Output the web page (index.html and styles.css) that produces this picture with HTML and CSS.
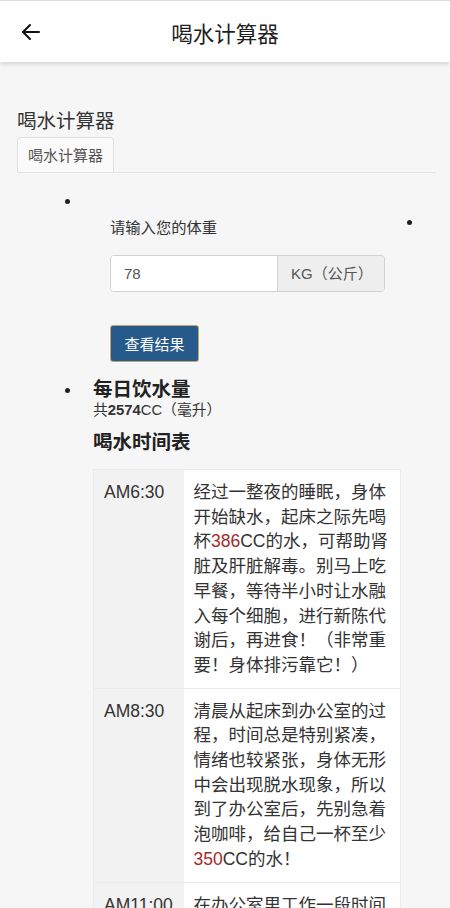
FILE: index.html
```html
<!DOCTYPE html>
<html lang="zh-CN">
<head>
<meta charset="utf-8">
<title>喝水计算器</title>
<link rel="stylesheet" href="styles.css">
</head>
<body>
<header class="appbar">
  <button class="back" aria-label="返回">
    <svg width="24" height="24" viewBox="0 0 24 24" fill="none" stroke="#111" stroke-width="2" stroke-linecap="round" stroke-linejoin="round"><path d="M20 12H4"/><path d="M11 5l-7 7 7 7"/></svg>
  </button>
  <h1 class="appbar-title">喝水计算器</h1>
</header>
<main class="page">
  <h2 class="section-title">喝水计算器</h2>
  <div class="tabs"><div class="tab">喝水计算器</div></div>
  <div class="list">
    <div class="item item-form">
      <div class="marker"><span class="dot"></span></div>
      <div class="form">
        <div class="label-row">
          <span class="label">请输入您的体重</span>
          <span class="dot dot-right"></span>
        </div>
        <div class="input-group">
          <div class="input">78</div>
          <div class="addon">KG（公斤）</div>
        </div>
        <button class="btn">查看结果</button>
      </div>
    </div>
    <div class="item item-result">
      <div class="marker"><span class="dot dot-result"></span></div>
      <div class="result">
        <h3 class="result-title">每日饮水量</h3>
        <p class="total">共<b>2574</b>CC（毫升）</p>
        <h3 class="result-title schedule-title">喝水时间表</h3>
        <table class="schedule">
          <tr>
            <td class="time">AM6:30</td>
            <td class="desc">经过一整夜的睡眠，身体开始缺水，起床之际先喝杯<span class="num">386</span>CC的水，可帮助肾脏及肝脏解毒。别马上吃早餐，等待半小时让水融入每个细胞，进行新陈代谢后，再进食！（非常重要！身体排污靠它！）</td>
          </tr>
          <tr>
            <td class="time">AM8:30</td>
            <td class="desc">清晨从起床到办公室的过程，时间总是特别紧凑，情绪也较紧张，身体无形中会出现脱水现象，所以到了办公室后，先别急着泡咖啡，给自己一杯至少<span class="num">350</span>CC的水！</td>
          </tr>
          <tr>
            <td class="time">AM11:00</td>
            <td class="desc">在办公室里工作一段时间后，一定要趁起身动动的时候，再给自己一天里的第三杯水，补充流失的水分，有助于放松紧张的工作情绪！</td>
          </tr>
        </table>
      </div>
    </div>
  </div>
</main>
</body>
</html>
```
FILE: styles.css
```css
* { box-sizing: border-box; }
html, body { margin: 0; padding: 0; }
body {
  width: 450px;
  background: #f6f6f6;
  color: #333;
  font-family: "Liberation Sans", "Noto Sans CJK SC", sans-serif;
}
.appbar {
  height: 62px;
  background: #fff;
  border-top: 1px solid #dcdcdc;
  box-shadow: 0 2px 4px rgba(0,0,0,0.14);
  display: flex;
  align-items: center;
  justify-content: center;
  position: relative;
}
.back {
  position: absolute;
  left: 19px;
  top: 19px;
  width: 24px;
  height: 24px;
  padding: 0;
  border: 0;
  background: none;
  display: flex;
}
.appbar-title {
  margin: 2px 0 0 0;
  font-family: "Noto Sans CJK SC", sans-serif;
  font-size: 21.5px;
  font-weight: 400;
  color: #1f1f1f;
  letter-spacing: 0;
}
.page {
  padding: 0 14px 0 17px;
}
.section-title {
  margin: 44px 0 0 0;
  font-family: "Noto Sans CJK SC", sans-serif;
  font-size: 19.5px;
  line-height: 28px;
  font-weight: 400;
  color: #333;
}
.tabs {
  margin-top: 3px;
  border-bottom: 1px solid #e2e2e2;
  display: flex;
}
.tab {
  width: 97px;
  height: 35px;
  padding: 7px 10px 0 10px;
  border: 1px solid #e2e2e2;
  border-bottom: 0;
  border-radius: 4px 4px 0 0;
  background: #fafafa;
  font-family: "Noto Sans CJK SC", sans-serif;
  font-size: 15px;
  line-height: 20px;
  color: #555;
}
.list {
  margin-top: 18px;
}
.item {
  display: flex;
  align-items: flex-start;
}
.marker {
  width: 76px;
  flex: none;
}
.dot {
  display: block;
  width: 5px;
  height: 5px;
  border-radius: 50%;
  background: #222;
}
.marker .dot {
  margin: 8px 0 0 48px;
}
.form {
  padding: 26px 0 0 17px;
}
.label-row {
  width: 302px;
  display: flex;
  justify-content: space-between;
  align-items: flex-start;
}
.label {
  font-size: 15.3px;
  line-height: 21px;
  color: #333;
}
.dot-right {
  margin-top: 2.5px;
}
.input-group {
  margin-top: 17px;
  width: 275px;
  height: 37px;
  display: flex;
  border: 1px solid #d2d2d2;
  border-radius: 4px;
  overflow: hidden;
}
.input {
  width: 166px;
  background: #fff;
  padding-left: 13px;
  font-size: 15px;
  line-height: 35px;
  color: #555;
}
.addon {
  flex: 1;
  background: #eee;
  border-left: 1px solid #d2d2d2;
  padding-left: 13px;
  font-size: 15px;
  line-height: 35px;
  color: #555;
}
.btn {
  display: block;
  margin-top: 33px;
  width: 89px;
  height: 37px;
  padding: 0;
  background: #265a8a;
  border: 1px solid #c4a768;
  border-radius: 3px;
  color: #fff;
  font-family: "Noto Sans CJK SC", sans-serif;
  font-size: 15px;
}
.item-result {
  margin-top: 13px;
}
.dot-result {
  margin-top: 12.5px !important;
}
.result-title {
  margin: 0;
  font-family: "Noto Sans CJK SC", sans-serif;
  font-size: 19.5px;
  line-height: 26px;
  font-weight: 700;
  color: #222;
}
.total {
  margin: 0;
  font-size: 14.8px;
  line-height: 18px;
  color: #333;
}
.total b { font-weight: 700; }
.schedule-title {
  margin-top: 9px;
}
.schedule {
  margin-top: 15px;
  width: 308px;
  border-collapse: collapse;
  background: #fff;
  border: 1px solid #ebebeb;
}
.schedule td {
  border-top: 1px solid #ebebeb;
  padding: 10px 10px;
  vertical-align: top;
  font-size: 17.5px;
  line-height: 24.7px;
  color: #333;
}
.schedule .time {
  width: 90px;
  background: #f2f2f2;
  white-space: nowrap;
}
.num {
  color: #a52a2a;
}
```
